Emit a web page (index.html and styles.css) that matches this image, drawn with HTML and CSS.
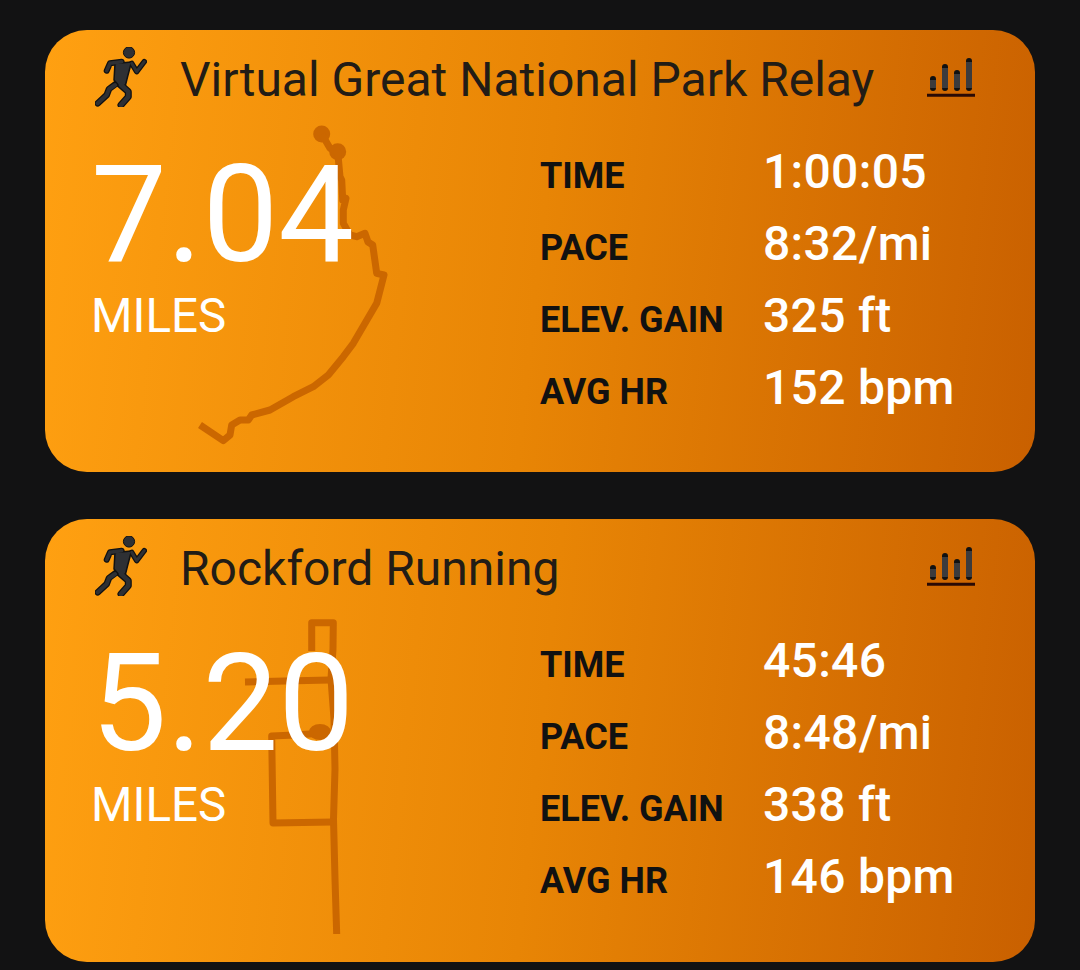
FILE: index.html
```html
<!DOCTYPE html>
<html lang="en">
<head>
<meta charset="utf-8">
<title>Activities</title>
<link rel="stylesheet" href="styles.css">
</head>
<body>
<svg class="defs" width="0" height="0" aria-hidden="true">
  <defs>
    <g id="runner">
      <g class="edge">
        <circle cx="34" cy="5.500" r="5.600" fill="#2e3034" stroke="#111" stroke-width="1"/>
        <path d="M26.700 14.700 L15 16.300 L11.700 23.700" stroke-width="6"/>
        <path d="M36.700 16.300 L41.700 24.700 L49.300 14.700" stroke-width="5.500"/>
        <path d="M22 36 L14 42 L11.700 48 L2.700 56.300" stroke-width="6.500"/>
        <path d="M24 36.500 L33.300 44.700 L33.300 49.700 L26 58" stroke-width="7"/>
      </g>
      <path class="torso" d="M20 16.500 L36.500 15 L32.500 30 L30.500 38 L25 40 L19 33 Z"/>
      <g class="fillstroke">
        <path d="M26.700 14.700 L15 16.300 L11.700 23.700" stroke-width="3.500"/>
        <path d="M36.700 16.300 L41.700 24.700 L49.300 14.700" stroke-width="3"/>
        <path d="M20 38 L14 42 L11.700 48 L2.700 56.300" stroke-width="4"/>
        <path d="M26 38 L33.300 44.700 L33.300 49.700 L26 58" stroke-width="4.500"/>
      </g>
    </g>
    <g id="bars">
      <path d="M0 38.300 H48" stroke="#2a0a05" stroke-width="3" fill="none"/>
      <path d="M6 31 V22 M18 31 V10 M30 31 V16 M42 31 V4" stroke="#111" stroke-width="6" stroke-linecap="round" fill="none"/>
      <path d="M6 31 V23 M18 31 V11 M30 31 V17 M42 31 V5" stroke="#3b3b3d" stroke-width="6" fill="none"/>
    </g>
  </defs>
</svg>
<main class="list">
  <article class="card">
    <svg class="route" viewBox="0 0 990 442" aria-hidden="true">
      <circle class="dot" cx="276.700" cy="104" r="8.500"/>
      <circle class="dot" cx="292.700" cy="121.700" r="8.500"/>
      <path class="track" d="M276.700 104 L285 118.300 L292.700 121.700 L295 146.700 L296.700 150 L297.700 170 L301 168.300 L298.300 180 L298.300 193.300 L305 205 L311.700 206.700 L320 203.300 L323 212 L327.700 215 L331.700 243.300 L339 245 L331.700 273.300 L320 293.300 L308.300 313.300 L298.300 326.700 L283.300 345 L268.300 356.700 L248.300 366.700 L225 380 L206.700 385 L203.300 390 L195 390 L186.700 395 L185 405 L178.300 410.700 L155 395"/>
    </svg>
    <header class="head">
      <svg class="run-ico" viewBox="0 0 52 60" aria-hidden="true"><use href="#runner"/></svg>
      <h2 class="name">Virtual Great National Park Relay</h2>
      <svg class="bar-ico" viewBox="0 0 48 41" aria-hidden="true"><use href="#bars"/></svg>
    </header>
    <div class="body">
      <div class="dist">
        <div class="num">7.04</div>
        <div class="unit">MILES</div>
      </div>
      <dl class="stats">
        <dt>TIME</dt><dd>1:00:05</dd>
        <dt>PACE</dt><dd>8:32/mi</dd>
        <dt>ELEV. GAIN</dt><dd>325 ft</dd>
        <dt>AVG HR</dt><dd>152 bpm</dd>
      </dl>
    </div>
  </article>
  <article class="card">
    <svg class="route" viewBox="0 0 990 443" aria-hidden="true">
      <path class="track" d="M291.700 415 L290 360 L288.500 300 L290 250 L289 200 L286 160 L288 130 L288.300 103.700 L266.700 103.700 L266.700 132"/>
      <path class="track" d="M200 163 L240 162 L285 161"/>
      <path class="track" d="M275 214.300 L250 216 L226.700 217 L228 304 L288 303"/>
      <ellipse class="dot" cx="275" cy="213" rx="11" ry="8"/>
    </svg>
    <header class="head">
      <svg class="run-ico" viewBox="0 0 52 60" aria-hidden="true"><use href="#runner"/></svg>
      <h2 class="name">Rockford Running</h2>
      <svg class="bar-ico" viewBox="0 0 48 41" aria-hidden="true"><use href="#bars"/></svg>
    </header>
    <div class="body">
      <div class="dist">
        <div class="num">5.20</div>
        <div class="unit">MILES</div>
      </div>
      <dl class="stats">
        <dt>TIME</dt><dd>45:46</dd>
        <dt>PACE</dt><dd>8:48/mi</dd>
        <dt>ELEV. GAIN</dt><dd>338 ft</dd>
        <dt>AVG HR</dt><dd>146 bpm</dd>
      </dl>
    </div>
  </article>
</main>
</body>
</html>
```
FILE: styles.css
```css
html, body { margin: 0; padding: 0; }
body {
  width: 1080px;
  height: 970px;
  overflow: hidden;
  background: #121213;
  font-family: Roboto, "Liberation Sans", sans-serif;
}
.defs { display: block; height: 0; }
.edge path {
  fill: none;
  stroke: #111;
  stroke-linecap: round;
  stroke-linejoin: round;
}
.fillstroke path {
  fill: none;
  stroke: #2e3034;
  stroke-linecap: round;
  stroke-linejoin: round;
}
.torso {
  fill: #2e3034;
  stroke: #111;
  stroke-width: 1.500;
  stroke-linejoin: round;
}
.list {
  display: flex;
  flex-direction: column;
  gap: 47px;
  padding: 30px 45px 0;
}
.card {
  position: relative;
  height: 442px;
  border-radius: 42px;
  overflow: hidden;
  background: linear-gradient(96deg, #ffa011 0%, #e88505 50%, #c96000 100%);
}
.card:last-child { height: 443px; }
.route {
  position: absolute;
  left: 0;
  top: 0;
  width: 100%;
  height: 100%;
}
.track {
  fill: none;
  stroke: #cb6700;
  stroke-width: 7;
  stroke-linejoin: round;
}
.dot { fill: #cb6700; }
.head {
  position: relative;
  display: flex;
  align-items: center;
  height: 100px;
  padding-left: 50px;
}
.run-ico {
  width: 52px;
  height: 60px;
  flex: none;
  margin-top: -6px;
}
.name {
  margin: -2px 0 0 33px;
  font-size: 48px;
  font-weight: 400;
  color: #221c16;
  white-space: nowrap;
}
.bar-ico {
  position: absolute;
  left: 882px;
  top: 27px;
  width: 48px;
  height: 41px;
}
.body {
  position: relative;
  display: flex;
}
.dist { width: 495px; padding-left: 46px; box-sizing: border-box; }
.num {
  margin-top: 12px;
  font-size: 135px;
  font-weight: 400;
  line-height: 146px;
  color: #fff;
}
.unit {
  margin-top: 1px;
  font-size: 47.500px;
  font-weight: 400;
  line-height: 54px;
  color: #fff;
}
.stats {
  margin: 4px 0 0;
  display: grid;
  grid-template-columns: 223px auto;
  grid-auto-rows: 72px;
  align-items: center;
}
.stats dt {
  font-size: 36px;
  font-weight: 700;
  color: #111;
  white-space: nowrap;
  padding-top: 12px;
}
.stats dd {
  margin: 0;
  padding-top: 3px;
  font-size: 48px;
  font-weight: 500;
  letter-spacing: 0.3px;
  color: #fff;
  white-space: nowrap;
}
```
